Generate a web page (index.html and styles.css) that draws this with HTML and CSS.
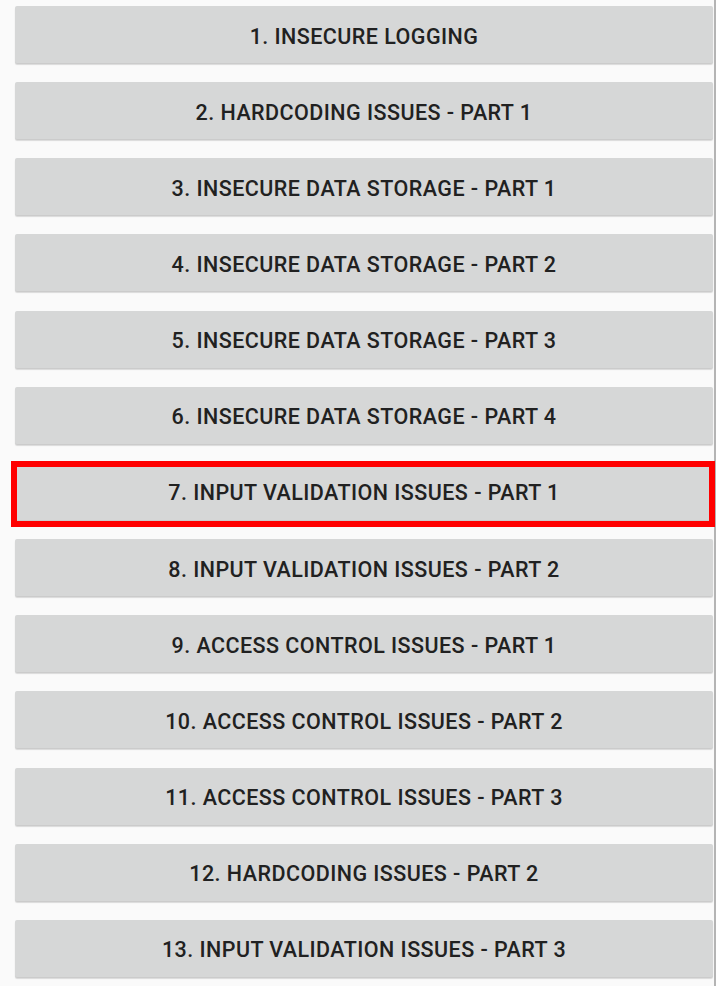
FILE: index.html
```html
<!DOCTYPE html>
<html>
<head>
<meta charset="utf-8">
<link rel="stylesheet" href="styles.css">
</head>
<body>
<div class="page">
  <ul class="list">
    <li class="btn">1. Insecure Logging</li>
    <li class="btn">2. Hardcoding Issues - Part 1</li>
    <li class="btn">3. Insecure Data Storage - Part 1</li>
    <li class="btn">4. Insecure Data Storage - Part 2</li>
    <li class="btn">5. Insecure Data Storage - Part 3</li>
    <li class="btn">6. Insecure Data Storage - Part 4</li>
    <li class="btn">7. Input Validation Issues - Part 1</li>
    <li class="btn">8. Input Validation Issues - Part 2</li>
    <li class="btn">9. Access Control Issues - Part 1</li>
    <li class="btn">10. Access Control Issues - Part 2</li>
    <li class="btn">11. Access Control Issues - Part 3</li>
    <li class="btn">12. Hardcoding Issues - Part 2</li>
    <li class="btn">13. Input Validation Issues - Part 3</li>
  </ul>
  <div class="highlight"></div>
</div>
</body>
</html>
```
FILE: styles.css
```css
html, body {
  margin: 0;
  padding: 0;
  background: #fafafa;
  height: 100%;
  overflow: hidden;
}
.page {
  position: relative;
  height: 986px;
  width: 714px;
  border-right: 2px solid #b4b4b4;
  box-sizing: content-box;
}
.list {
  list-style: none;
  margin: 0;
  padding: 6px 1px 0 15px;
  display: flex;
  flex-direction: column;
  gap: 19.17px;
}
.btn {
  height: 57px;
  box-sizing: border-box;
  padding-top: 3px;
  background: #d6d7d7;
  border-radius: 2px;
  box-shadow: 0 2px 1px rgba(0,0,0,0.12), 0 1px 1px rgba(0,0,0,0.08);
  display: flex;
  align-items: center;
  justify-content: center;
  font-family: Roboto, "Noto Sans", sans-serif;
  font-weight: 500;
  font-size: 21.5px;
  letter-spacing: 0.45px;
  text-transform: uppercase;
  color: #212121;
}
.highlight {
  position: absolute;
  left: 11px;
  top: 461px;
  width: 704px;
  height: 66px;
  box-sizing: border-box;
  border: 6px solid #ff0000;
}
```
